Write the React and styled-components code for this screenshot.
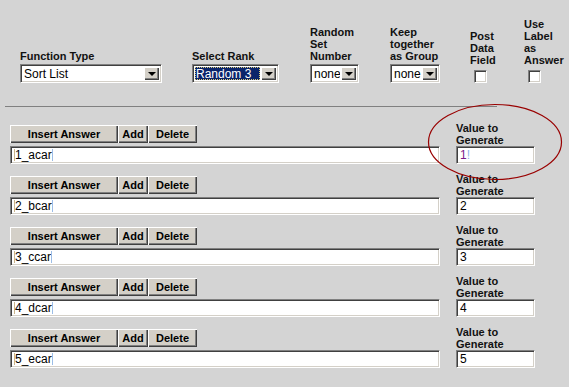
import React from 'react'
import styled, { createGlobalStyle } from 'styled-components'

const GlobalStyle = createGlobalStyle`
  body {
    margin: 0;
    background: #d4d4d4;
    font-family: "Liberation Sans", Arial, sans-serif;
  }
`

const answers = [
  { text: '1_acar', value: '1' },
  { text: '2_bcar', value: '2' },
  { text: '3_ccar', value: '3' },
  { text: '4_dcar', value: '4' },
  { text: '5_ecar', value: '5' },
]

const Page = () => {
  return (
    <Wrapper>
      <GlobalStyle />

      {/* top settings */}
      <Header>
        <Field $w={172}>
          <Label>Function Type</Label>
          <Select $w={142} value="Sort List" />
        </Field>
        <Field $w={118}>
          <Label>Select Rank</Label>
          <Select $w={87} value="Random 3" selected />
        </Field>
        <Field $w={80}>
          <Label>Random<br />Set<br />Number</Label>
          <Select $w={49} value="none" />
        </Field>
        <Field $w={80}>
          <Label>Keep<br />together<br />as Group</Label>
          <Select $w={50} value="none" />
        </Field>
        <Field $w={54}>
          <Label>Post<br />Data<br />Field</Label>
          <CheckBox />
        </Field>
        <Field $w={45}>
          <Label>Use<br />Label<br />as<br />Answer</Label>
          <CheckBox />
        </Field>
      </Header>

      <Divider />

      {/* answer rows */}
      <List>
        {answers.map((a, i) => (
          <Row key={a.text}>
            <AnswerCol>
              <ButtonBar>
                <ClassicButton $w={108}>Insert Answer</ClassicButton>
                <ClassicButton $w={30}>Add</ClassicButton>
                <ClassicButton $w={49}>Delete</ClassicButton>
              </ButtonBar>
              <TextBox $w={430}>
                <Mark $c="#c9b48c" />
                {a.text}
                <Mark $c="#9cbde6" />
              </TextBox>
            </AnswerCol>
            <ValueCol>
              <Label>Value to<br />Generate</Label>
              <TextBox $w={79}>
                {i === 0 ? (
                  <>
                    <Tinted $c="#7a1a8a">1</Tinted>
                    <Tinted $c="#8fb4ec">!</Tinted>
                  </>
                ) : a.value}
              </TextBox>
            </ValueCol>
          </Row>
        ))}
      </List>

      <Circle width="136" height="78" viewBox="0 0 136 78">
        <ellipse cx="68" cy="39" rx="66.5" ry="37.5" fill="none" stroke="#990000" strokeWidth="1.2" />
      </Circle>
    </Wrapper>
  )
}

const Select = ({ $w, value, selected }) => (
  <SelectBox $w={$w}>
    <SelectValue $selected={selected}>{value}</SelectValue>
    <DropButton><Arrow /></DropButton>
  </SelectBox>
)

const inset = `
  border: 1px solid;
  border-color: #808080 #ffffff #ffffff #808080;
  box-shadow: inset 1px 1px #404040, inset -1px -1px #d4d0c8;
`

const Wrapper = styled.div`
  position: relative;
  width: 569px;
  height: 387px;
  overflow: hidden;
  padding-top: 18px;
  box-sizing: border-box;
`

const Header = styled.div`
  display: flex;
  align-items: flex-end;
  padding-left: 20px;
`

const Field = styled.div`
  width: ${({ $w }) => $w}px;
  display: flex;
  flex-direction: column;
  align-items: flex-start;
`

const Label = styled.div`
  font-size: 11px;
  font-weight: bold;
  line-height: 12px;
  color: #111;
`

const SelectBox = styled.div`
  ${inset}
  box-sizing: border-box;
  width: ${({ $w }) => $w}px;
  height: 19px;
  margin-top: 2px;
  background: #fff;
  display: flex;
  align-items: stretch;
  padding: 2px;
`

const SelectValue = styled.span`
  flex: 1;
  font-size: 12px;
  line-height: 15px;
  padding: 0 1px;
  margin-right: 1px;
  color: ${({ $selected }) => ($selected ? '#fff' : '#000')};
  background: ${({ $selected }) => ($selected ? '#0a246a' : 'transparent')};
  outline: ${({ $selected }) => ($selected ? '1px dotted #d8c878' : 'none')};
  outline-offset: -1px;
  white-space: nowrap;
  overflow: hidden;
`

const DropButton = styled.span`
  width: 15px;
  flex: none;
  background: #d4d0c8;
  box-shadow: inset 1px 1px #ffffff, inset -1px -1px #404040, inset -2px -2px #808080;
  display: flex;
  align-items: center;
  justify-content: center;
`

const Arrow = styled.span`
  width: 0;
  height: 0;
  border-left: 4px solid transparent;
  border-right: 4px solid transparent;
  border-top: 4px solid #000;
  margin-top: 1px;
`

const CheckBox = styled.span`
  ${inset}
  box-sizing: border-box;
  width: 13px;
  height: 13px;
  margin: 4px 0 0 4px;
  background: #fff;
`

const Divider = styled.div`
  margin: 23px 0 0 5px;
  width: 492px;
  height: 1px;
  background: #808080;
`

const List = styled.div`
  margin-top: 18px;
  padding-left: 10px;
  display: flex;
  flex-direction: column;
  gap: 12px;
`

const Row = styled.div`
  display: flex;
  align-items: flex-end;
  gap: 16px;
  height: 39px;
`

const AnswerCol = styled.div`
  display: flex;
  flex-direction: column;
  gap: 3px;
`

const ButtonBar = styled.div`
  display: flex;
  height: 18px;
`

const ClassicButton = styled.button`
  width: ${({ $w }) => $w}px;
  height: 18px;
  padding: 0;
  border: none;
  background: #d4d0c8;
  box-shadow: inset 1px 1px #ffffff, inset -1px -1px #404040, inset -2px -2px #808080;
  font-family: "Liberation Sans", Arial, sans-serif;
  font-size: 11px;
  font-weight: bold;
  color: #000;
`

const TextBox = styled.div`
  ${inset}
  box-sizing: border-box;
  width: ${({ $w }) => $w}px;
  height: 18px;
  background: #fff;
  padding: 0 0 0 3px;
  font-size: 12px;
  line-height: 16px;
  color: #000;
  display: flex;
  align-items: center;
`

const Mark = styled.span`
  width: 1px;
  height: 12px;
  background: ${({ $c }) => $c};
`

const Tinted = styled.span`
  color: ${({ $c }) => $c};
`

const ValueCol = styled.div`
  display: flex;
  flex-direction: column;
`

const Circle = styled.svg`
  position: absolute;
  left: 427px;
  top: 103px;
  pointer-events: none;
`

export default Page
